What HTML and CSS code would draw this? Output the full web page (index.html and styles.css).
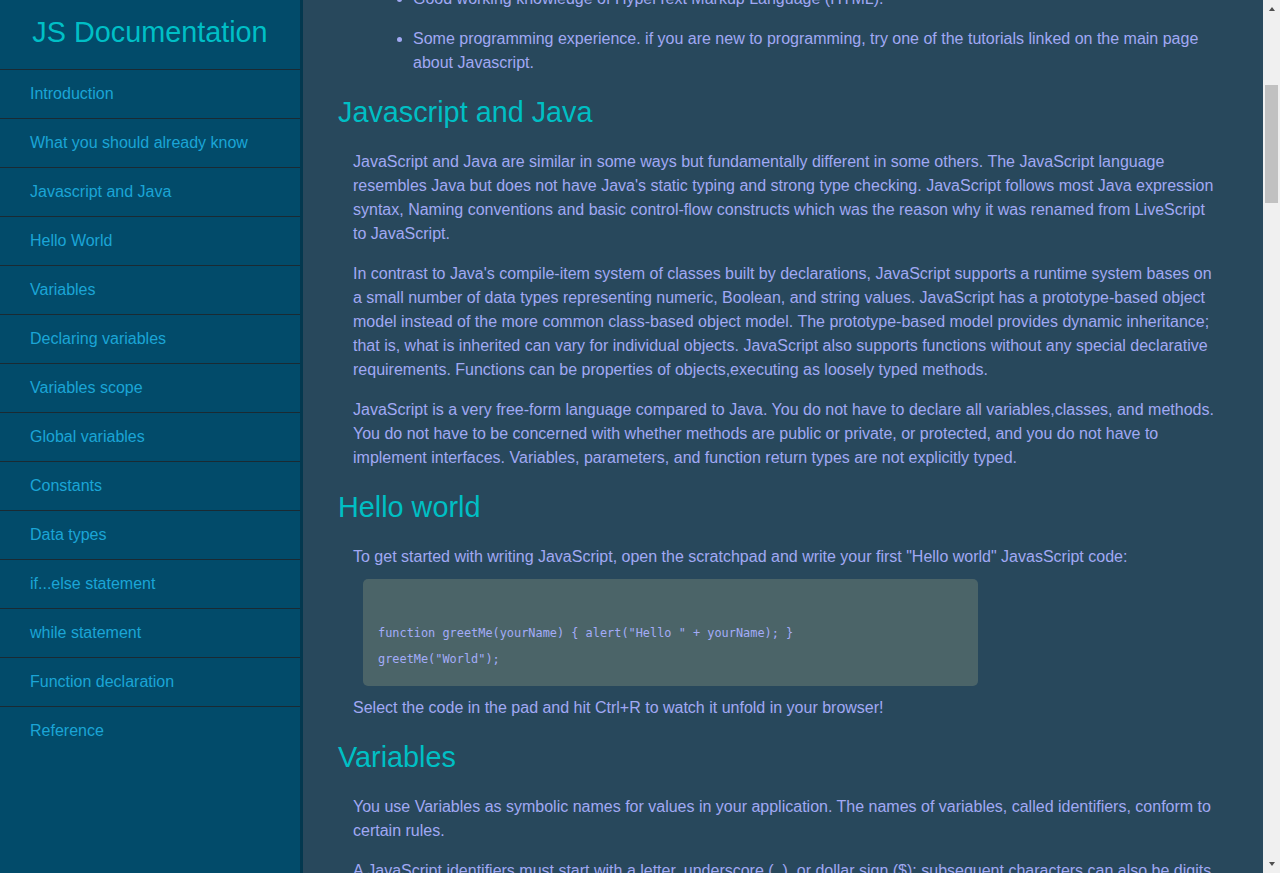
FILE: index.html
```html
<!DOCTYPE html>
<html lang="en">
<head>
<meta charset="utf-8">
<title>JS Documentation</title>
<link rel="stylesheet" href="styles.css">
</head>
<body>
<div class="layout">
  <nav class="sidebar" id="navbar">
    <header class="sidebar-title">JS Documentation</header>
    <a class="nav-link" href="#introduction">Introduction</a>
    <a class="nav-link" href="#what_you_should_already_know">What you should already know</a>
    <a class="nav-link" href="#javascript_and_java">Javascript and Java</a>
    <a class="nav-link" href="#hello_world">Hello World</a>
    <a class="nav-link" href="#variables">Variables</a>
    <a class="nav-link" href="#declaring_variables">Declaring variables</a>
    <a class="nav-link" href="#variables_scope">Variables scope</a>
    <a class="nav-link" href="#global_variables">Global variables</a>
    <a class="nav-link" href="#constants">Constants</a>
    <a class="nav-link" href="#data_types">Data types</a>
    <a class="nav-link" href="#if_else_statement">if...else statement</a>
    <a class="nav-link" href="#while_statement">while statement</a>
    <a class="nav-link" href="#function_declaration">Function declaration</a>
    <a class="nav-link" href="#reference">Reference</a>
  </nav>

  <main class="main" id="main-doc">
    <section class="main-section" id="introduction">
      <header class="section-title">Introduction</header>
      <p>JavaScript is a cross-platform, object-oriented scripting language. It is a small and lightweight language. Inside a host environment (for example, a web browser), JavaScript can be connected to the objects of its environment to provide programmatic control over them.</p>
      <p>JavaScript contains a standard library of objects, such as Array, Date, and Math, and a core set of language elements such as operators, control structures, and statements. Core JavaScript can be extended for a variety of purposes by supplementing it with additional objects; for example:</p>
      <ul>
        <li>Client-side JavaScript extends the core language by supplying objects to control a browser and its Document Object Model (DOM). For example, client-side extensions allow an application to place elements on an HTML form and respond to user events such as mouse clicks, form input, and page navigation.</li>
        <li>Server-side JavaScript extends the core language by supplying objects relevant to running JavaScript on a server. For example, server-side extensions allow an application to communicate with a database, provide continuity of information from one invocation to another of the application, or perform file manipulations on a server.</li>
      </ul>
    </section>

    <section class="main-section" id="what_you_should_already_know">
      <header class="section-title">What you should already know</header>
      <p>This guide assumes you have the following basic background:</p>
      <ul>
        <li>A general understanding of the Internet and the World Wide Web (WWW).</li>
        <li>Good working knowledge of HyperText Markup Language (HTML).</li>
        <li>Some programming experience. if you are new to programming, try one of the tutorials linked on the main page about Javascript.</li>
      </ul>
    </section>

    <section class="main-section" id="javascript_and_java">
      <header class="section-title">Javascript and Java</header>
      <p>JavaScript and Java are similar in some ways but fundamentally different in some others. The JavaScript language resembles Java but does not have Java's static typing and strong type checking. JavaScript follows most Java expression syntax, Naming conventions and basic control-flow constructs which was the reason why it was renamed from LiveScript to JavaScript.</p>
      <p>In contrast to Java's compile-item system of classes built by declarations, JavaScript supports a runtime system bases on a small number of data types representing numeric, Boolean, and string values. JavaScript has a prototype-based object model instead of the more common class-based object model. The prototype-based model provides dynamic inheritance; that is, what is inherited can vary for individual objects. JavaScript also supports functions without any special declarative requirements. Functions can be properties of objects,executing as loosely typed methods.</p>
      <p>JavaScript is a very free-form language compared to Java. You do not have to declare all variables,classes, and methods. You do not have to be concerned with whether methods are public or private, or protected, and you do not have to implement interfaces. Variables, parameters, and function return types are not explicitly typed.</p>
    </section>

    <section class="main-section" id="hello_world">
      <header class="section-title">Hello world</header>
      <p>To get started with writing JavaScript, open the scratchpad and write your first "Hello world" JavasScript code:</p>
      <pre class="code">

function greetMe(yourName) { alert("Hello " + yourName); }
greetMe("World");</pre>
      <p>Select the code in the pad and hit Ctrl+R to watch it unfold in your browser!</p>
    </section>

    <section class="main-section" id="variables">
      <header class="section-title">Variables</header>
      <p>You use Variables as symbolic names for values in your application. The names of variables, called identifiers, conform to certain rules.</p>
      <p>A JavaScript identifiers must start with a letter, underscore (_), or dollar sign ($); subsequent characters can also be digits (0-9). Because JavaScript is case sensitive, letters include the characters "A" through "Z" (uppercase) and the characters "a" through "z" (lowercase).</p>
      <p>You can use ISO 8859-1 or Unicode letters such as å and ü in identifiers. You can also use the Unicode escape sequences as characters in identifiers. Some examples of legal names are Number_hits, temp99, and _name.</p>
    </section>

    <section class="main-section" id="declaring_variables">
      <header class="section-title">Declaring variables</header>
      <p>You can declare a variable in three ways:</p>
      <p>With the keyword var. For example,</p>
      <pre class="code">

var x = 42.</pre>
      <p>This syntax can be used to declare both local and global variables.</p>
      <p>By simply assigning it a value. For example,</p>
      <pre class="code">

x = 42.</pre>
      <p>This always declares a global variable. It generates a strict JavaScript warning. You shouldn't use this variant.</p>
      <p>With the keyword let. For example,</p>
      <pre class="code">

let y = 13.</pre>
      <p>This syntax can be used to declare a block scope local variable. See Variable scope below.</p>
    </section>

    <section class="main-section" id="variables_scope">
      <header class="section-title">Variables scope</header>
      <p>When you declare a variable outside of any function, it is called a global variable, because it is available to any other code in the current document. When you declare a variable within a function, it is called a local variable, because it is available only within that function.</p>
      <p>JavaScript before ECMAScript 2015 does not have block statement scope; rather, a variable declared within a block is local to the function (or global scope) that the block resides within. For example the following code will log 5, because the scope of x is the function (or global context) within which x is declared, not the block, which in this case is an if statement.</p>
      <pre class="code">

if (true) { var x = 5; } console.log(x); // 5</pre>
      <p>This behavior changes, when using the let declaration introduced in ECMAScript 2015.</p>
      <pre class="code">

if (true) { let y = 5; } console.log(y); // ReferenceError: y is not defined</pre>
    </section>

    <section class="main-section" id="global_variables">
      <header class="section-title">Global variables</header>
      <p>Global variables are in fact properties of the global object. In web pages the global object is window, so you can set and access global variables using the window.variable syntax.</p>
      <p>Consequently, you can access global variables declared in one window or frame from another window or frame by specifying the window or frame name. For example, if a variable called phoneNumber is declared in a document, you can refer to this variable from an iframe as parent.phoneNumber.</p>
    </section>

    <section class="main-section" id="constants">
      <header class="section-title">Constants</header>
      <p>You can create a read-only, named constant with the const keyword. The syntax of a constant identifier is the same as for a variable identifier: it must start with a letter, underscore or dollar sign and can contain alphabetic, numeric, or underscore characters.</p>
      <pre class="code">

const PI = 3.14;</pre>
      <p>A constant cannot change value through assignment or be re-declared while the script is running. It has to be initialized to a value.</p>
      <p>The scope rules for constants are the same as those for let block scope variables. If the const keyword is omitted, the identifier is assumed to represent a variable.</p>
      <p>You cannot declare a constant with the same name as a function or variable in the same scope. For example:</p>
      <pre class="code">

// THIS WILL CAUSE AN ERROR function f() {}; const f = 5; // THIS WILL CAUSE AN ERROR ALSO
function f() { const g = 5; var g; //statements }</pre>
      <p>However, object attributes are not protected, so the following statement is executed without problems.</p>
      <pre class="code">

const MY_OBJECT = {"key": "value"}; MY_OBJECT.key = "otherValue";</pre>
    </section>

    <section class="main-section" id="data_types">
      <header class="section-title">Data types</header>
      <p>The latest ECMAScript standard defines seven data types:</p>
      <ul>
        <li>Six data types that are primitives:
          <ul>
            <li>Boolean. true and false.</li>
            <li>null. A special keyword denoting a null value. Because JavaScript is case-sensitive, null is not the same as Null, NULL, or any other variant.</li>
            <li>undefined. A top-level property whose value is undefined.</li>
            <li>Number. 42 or 3.14159.</li>
            <li>String. "Howdy"</li>
            <li>Symbol (new in ECMAScript 2015). A data type whose instances are unique and immutable.</li>
          </ul>
        </li>
        <li>and Object</li>
      </ul>
      <p>Although these data types are a relatively small amount, they enable you to perform useful functions with your applications. Objects and functions are the other fundamental elements in the language. You can think of objects as named containers for values, and functions as procedures that your application can perform.</p>
    </section>

    <section class="main-section" id="if_else_statement">
      <header class="section-title">if...else statement</header>
      <p>Use the if statement to execute a statement if a logical condition is true. Use the optional else clause to execute a statement if the condition is false. An if statement looks as follows:</p>
      <pre class="code">

if (condition) { statement_1; } else { statement_2; }</pre>
      <p>condition can be any expression that evaluates to true or false. See Boolean for an explanation of what evaluates to true and false. If condition evaluates to true, statement_1 is executed; otherwise, statement_2 is executed. statement_1 and statement_2 can be any statement, including further nested if statements.</p>
      <p>You may also compound the statements using else if to have multiple conditions tested in sequence, as follows:</p>
      <pre class="code">

if (condition_1) { statement_1; } else if (condition_2) { statement_2; } else if (condition_n) { statement_n; }
else { statement_last; }</pre>
      <p>In the case of multiple conditions only the first logical condition which evaluates to true will be executed. To execute multiple statements, group them within a block statement ({ ... }) . In general, it's good practice to always use block statements, especially when nesting if statements:</p>
      <pre class="code">

if (condition) { statement_1_runs_if_condition_is_true; statement_2_runs_if_condition_is_true; }
else { statement_3_runs_if_condition_is_false; statement_4_runs_if_condition_is_false; }</pre>
      <p>It is advisable to not use simple assignments in a conditional expression, because the assignment can be confused with equality when glancing over the code. For example, do not use the following code:</p>
      <pre class="code">

if (x = y) { /* statements here */ }</pre>
      <p>If you need to use an assignment in a conditional expression, a common practice is to put additional parentheses around the assignment. For example:</p>
      <pre class="code">

if ((x = y)) { /* statements here */ }</pre>
    </section>

    <section class="main-section" id="while_statement">
      <header class="section-title">while statement</header>
      <p>A while statement executes its statements as long as a specified condition evaluates to true. A while statement looks as follows:</p>
      <pre class="code">

while (condition) statement</pre>
      <p>If the condition becomes false, statement within the loop stops executing and control passes to the statement following the loop.</p>
      <p>The condition test occurs before statement in the loop is executed. If the condition returns true, statement is executed and the condition is tested again. If the condition returns false, execution stops and control is passed to the statement following while.</p>
      <p>To execute multiple statements, use a block statement ({ ... }) to group those statements.</p>
      <p>Example:</p>
      <p>The following while loop iterates as long as n is less than three:</p>
      <pre class="code">

var n = 0; var x = 0; while (n &lt; 3) { n++; x += n; }</pre>
      <p>With each iteration, the loop increments n and adds that value to x. Therefore, x and n take on the following values:</p>
      <ul>
        <li>After the first pass: n = 1 and x = 1</li>
        <li>After the second pass: n = 2 and x = 3</li>
        <li>After the third pass: n = 3 and x = 6</li>
      </ul>
      <p>After completing the third pass, the condition n &lt; 3 is no longer true, so the loop terminates.</p>
    </section>

    <section class="main-section" id="function_declaration">
      <header class="section-title">Function declaration</header>
      <p>A function definition (also called a function declaration, or function statement) consists of the function keyword, followed by:</p>
      <ul>
        <li>The name of the function.</li>
        <li>A list of arguments to the function, enclosed in parentheses and separated by commas.</li>
        <li>The JavaScript statements that define the function, enclosed in curly brackets, { }.</li>
      </ul>
      <p>For example, the following code defines a simple function named square:</p>
      <pre class="code">

function square(number) { return number * number; }</pre>
      <p>The function square takes one argument, called number. The function consists of one statement that says to return the argument of the function (that is, number) multiplied by itself. The return statement specifies the value returned by the function.</p>
      <pre class="code">

return number * number;</pre>
      <p>Primitive parameters (such as a number) are passed to functions by value; the value is passed to the function, but if the function changes the value of the parameter, this change is not reflected globally or in the calling function.</p>
    </section>

    <section class="main-section" id="reference">
      <header class="section-title">Reference</header>
      <ul>
        <li>All the documentation in this page is taken from MDN</li>
      </ul>
    </section>
  </main>

  <div class="scrollbar" aria-hidden="true">
    <div class="sb-btn"><span class="arrow-up"></span></div>
    <div class="sb-track"><div class="sb-thumb"></div></div>
    <div class="sb-btn"><span class="arrow-down"></span></div>
  </div>
</div>
<script src="script.js"></script>
</body>
</html>
```

FILE: styles.css
```css
html, body {
  margin: 0;
  padding: 0;
  height: 100%;
}

body {
  font-family: "Liberation Sans", Arial, sans-serif;
  font-size: 16px;
  line-height: 24px;
  background: #28485c;
  overflow: hidden;
}

.layout {
  display: flex;
  height: 100vh;
}

/* ---------- sidebar ---------- */
.sidebar {
  flex: 0 0 300px;
  display: flex;
  flex-direction: column;
  background: #024b6a;
  border-right: 3px solid #03384f;
}

.sidebar-title {
  padding: 16px 0 20px;
  font-size: 28.8px;
  line-height: 33px;
  color: #00bfc6;
  text-align: center;
}

.nav-link {
  display: block;
  padding: 12px 30px;
  border-top: 1px solid #1a2a33;
  color: #1ba5d6;
  text-decoration: none;
  line-height: 24px;
}

/* ---------- main ---------- */
.main {
  flex: 1;
  min-width: 0;
  overflow-y: scroll;
  scrollbar-width: none;
  padding: 0 35px 40px;
  color: #a1a9f4;
}

.section-title {
  display: block;
  margin: 21px 0;
  font-size: 28.8px;
  line-height: 33px;
  color: #00bfc4;
}

.main-section p {
  margin: 16px 10px 16px 15px;
}

.main-section ul {
  margin: 16px 10px 16px 15px;
  padding-left: 60px;
}

.main-section ul ul {
  margin: 16px 0;
  padding-left: 40px;
}

.main-section li + li {
  margin-top: 16px;
}

.code {
  margin: 10px 0 10px 25px;
  width: 585px;
  padding: 15px 15px 14px;
  background: #4b6468;
  border-radius: 5px;
  color: #a4acf8;
  font-family: "DejaVu Sans Mono", "Liberation Mono", monospace;
  font-size: 11.9px;
  line-height: 26px;
  white-space: pre-wrap;
}

.main-section p:has(+ .code) {
  margin-bottom: 10px;
}

.code + p {
  margin-top: 10px;
}

/* ---------- classic window scrollbar ---------- */
.scrollbar {
  flex: 0 0 17px;
  display: flex;
  flex-direction: column;
  background: #f0f0f0;
}

.sb-btn {
  flex: 0 0 17px;
  display: flex;
  justify-content: center;
  align-items: center;
}

.arrow-up {
  width: 0;
  height: 0;
  margin-top: 1px;
  border-left: 3.5px solid transparent;
  border-right: 3.5px solid transparent;
  border-bottom: 4px solid #505050;
}

.arrow-down {
  width: 0;
  height: 0;
  margin-top: -2px;
  border-left: 3.5px solid transparent;
  border-right: 3.5px solid transparent;
  border-top: 4px solid #505050;
}

.sb-track {
  flex: 1;
  padding: 0 2px;
}

.sb-thumb {
  margin-top: 68px;
  height: 118px;
  background: #c1c1c1;
}
```

FILE: script.js
```js
(function () {
  var main = document.querySelector('.main');
  var target = document.querySelector('#javascript_and_java .section-title');
  if (main && target) {
    main.scrollTop += target.getBoundingClientRect().top - 96;
  }
})();
```
